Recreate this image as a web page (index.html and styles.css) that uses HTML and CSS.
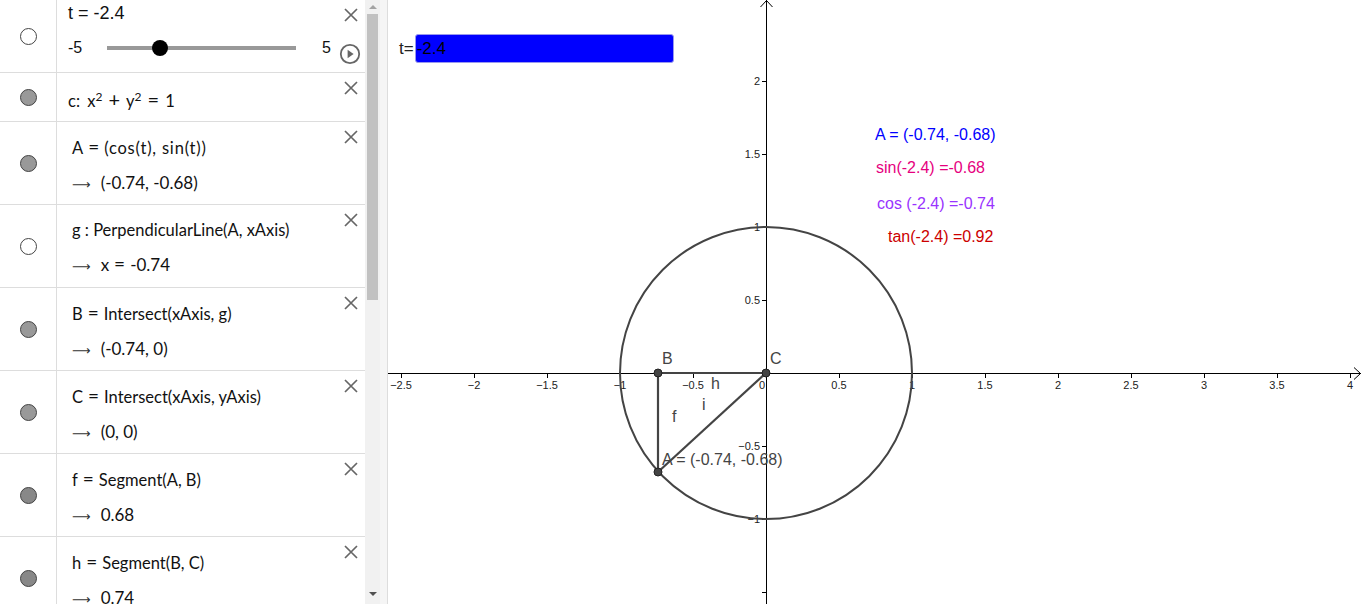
FILE: index.html
```html
<!DOCTYPE html>
<html>
<head>
<meta charset="utf-8">
<link rel="stylesheet" href="styles.css">
</head>
<body>
<div class="app">
  <div class="algebra">
    <div class="rows">
      <div class="row slider-row">
        <div class="marker"><span class="dot open"></span></div>
        <div class="content">
          <div class="slider-title">t = -2.4</div>
          <div class="slider-line">
            <span class="lim">-5</span>
            <span class="track"><span class="knob"></span></span>
            <span class="lim max">5</span>
            <svg class="play" width="22" height="22" viewBox="0 0 22 22"><circle cx="11" cy="11" r="9.2" fill="none" stroke="#666" stroke-width="1.8"/><path d="M8.6 6.8 L14.6 11 L8.6 15.2 Z" fill="#666"/></svg>
          </div>
        </div>
        <svg class="close" width="14" height="14" viewBox="0 0 14 14"><path d="M1 1 L13 13 M13 1 L1 13" stroke="#666" stroke-width="1.7"/></svg>
      </div>
      <div class="row c-row">
        <div class="marker"><span class="dot"></span></div>
        <div class="content"><div class="def single">c: <span class="gap"></span>x<span class="sup">2</span><span class="op wideop">+</span>y<span class="sup">2</span><span class="op wideop">=</span>1</div></div>
        <svg class="close" width="14" height="14" viewBox="0 0 14 14"><path d="M1 1 L13 13 M13 1 L1 13" stroke="#666" stroke-width="1.7"/></svg>
      </div>
      <div class="row">
        <div class="marker"><span class="dot"></span></div>
        <div class="content"><div class="def">A<span class="op">=</span><span class="wide">(cos(t), sin(t))</span></div><div class="val"><span class="arr">⟶</span>(-0.74, -0.68)</div></div>
        <svg class="close" width="14" height="14" viewBox="0 0 14 14"><path d="M1 1 L13 13 M13 1 L1 13" stroke="#666" stroke-width="1.7"/></svg>
      </div>
      <div class="row">
        <div class="marker"><span class="dot open"></span></div>
        <div class="content"><div class="def">g : PerpendicularLine(A, xAxis)</div><div class="val"><span class="arr">⟶</span>x<span class="op">=</span>-0.74</div></div>
        <svg class="close" width="14" height="14" viewBox="0 0 14 14"><path d="M1 1 L13 13 M13 1 L1 13" stroke="#666" stroke-width="1.7"/></svg>
      </div>
      <div class="row">
        <div class="marker"><span class="dot"></span></div>
        <div class="content"><div class="def">B<span class="op">=</span>Intersect(xAxis, g)</div><div class="val"><span class="arr">⟶</span>(-0.74, 0)</div></div>
        <svg class="close" width="14" height="14" viewBox="0 0 14 14"><path d="M1 1 L13 13 M13 1 L1 13" stroke="#666" stroke-width="1.7"/></svg>
      </div>
      <div class="row">
        <div class="marker"><span class="dot"></span></div>
        <div class="content"><div class="def">C<span class="op">=</span>Intersect(xAxis, yAxis)</div><div class="val"><span class="arr">⟶</span>(0, 0)</div></div>
        <svg class="close" width="14" height="14" viewBox="0 0 14 14"><path d="M1 1 L13 13 M13 1 L1 13" stroke="#666" stroke-width="1.7"/></svg>
      </div>
      <div class="row">
        <div class="marker"><span class="dot dark"></span></div>
        <div class="content"><div class="def">f<span class="op">=</span>Segment(A, B)</div><div class="val"><span class="arr">⟶</span>0.68</div></div>
        <svg class="close" width="14" height="14" viewBox="0 0 14 14"><path d="M1 1 L13 13 M13 1 L1 13" stroke="#666" stroke-width="1.7"/></svg>
      </div>
      <div class="row">
        <div class="marker"><span class="dot dark"></span></div>
        <div class="content"><div class="def">h<span class="op">=</span>Segment(B, C)</div><div class="val"><span class="arr">⟶</span>0.74</div></div>
        <svg class="close" width="14" height="14" viewBox="0 0 14 14"><path d="M1 1 L13 13 M13 1 L1 13" stroke="#666" stroke-width="1.7"/></svg>
      </div>
    </div>
    <div class="scrollbar">
      <span class="sb-up"></span>
      <span class="sb-thumb"></span>
      <span class="sb-down"></span>
    </div>
  </div>
  <div class="splitter"></div>
  <div class="graphics">
    <div class="input-box">
      <span class="input-label">t=</span>
      <span class="input-field">-2.4</span>
    </div>
    <div class="info">
      <div class="info-a">A = (-0.74, -0.68)</div>
      <div class="info-sin">sin(-2.4) =-0.68</div>
      <div class="info-cos">cos (-2.4) =-0.74</div>
      <div class="info-tan">tan(-2.4) =0.92</div>
    </div>
    <svg class="plot" width="978" height="604" viewBox="388 0 978 604">
      <g stroke="#000" stroke-width="1" fill="none">
        <line x1="388" y1="373.5" x2="1361" y2="373.5"/>
        <path d="M1354 367.5 L1360.5 373.5 L1354 379.5"/>
        <line x1="766.5" y1="0" x2="766.5" y2="604"/>
        <path d="M760.5 7 L766.5 0.5 L772.5 7"/>
        <path d="M401.5 373 v5 M474.5 373 v5 M547.5 373 v5 M620.5 373 v5 M693.5 373 v5 M839.5 373 v5 M912.5 373 v5 M985.5 373 v5 M1058.5 373 v5 M1131.5 373 v5 M1204.5 373 v5 M1277.5 373 v5 M1350.5 373 v5"/>
        <path d="M762 81.5 h4 M762 154.5 h4 M762 227.5 h4 M762 300.5 h4 M762 446.5 h4 M762 519.5 h4 M762 592.5 h4"/>
      </g>
      <g class="ticklbl" text-anchor="middle">
        <text x="401" y="389">−2.5</text>
        <text x="474" y="389">−2</text>
        <text x="547" y="389">−1.5</text>
        <text x="620" y="389">−1</text>
        <text x="693" y="389">−0.5</text>
        <text x="762" y="389">0</text>
        <text x="839" y="389">0.5</text>
        <text x="912" y="389">1</text>
        <text x="985" y="389">1.5</text>
        <text x="1058" y="389">2</text>
        <text x="1131" y="389">2.5</text>
        <text x="1204" y="389">3</text>
        <text x="1277" y="389">3.5</text>
        <text x="1350" y="389">4</text>
      </g>
      <g class="ticklbl" text-anchor="end">
        <text x="760" y="85">2</text>
        <text x="760" y="158">1.5</text>
        <text x="760" y="231">1</text>
        <text x="760" y="304">0.5</text>
        <text x="760" y="450">−0.5</text>
        <text x="760" y="523">−1</text>
      </g>
      <circle cx="766" cy="373" r="146" fill="none" stroke="#444" stroke-width="2"/>
      <g stroke="#444" stroke-width="2.2" fill="none">
        <line x1="658" y1="373" x2="766" y2="373"/>
        <line x1="658" y1="373" x2="658" y2="472"/>
        <line x1="658" y1="472" x2="766" y2="373"/>
      </g>
      <g fill="#444" stroke="#222" stroke-width="1">
        <circle cx="658" cy="373" r="4"/>
        <circle cx="766" cy="373" r="4"/>
        <circle cx="658" cy="472" r="4"/>
      </g>
      <g class="objlbl">
        <text x="662" y="364">B</text>
        <text x="770" y="364">C</text>
        <text x="711" y="389">h</text>
        <text x="702" y="410">i</text>
        <text x="672" y="422">f</text>
        <text x="662" y="465">A = (-0.74, -0.68)</text>
      </g>
    </svg>
  </div>
</div>
</body>
</html>
```
FILE: styles.css
```css
html, body {
  margin: 0;
  padding: 0;
  background: #fff;
  overflow: hidden;
}
.app {
  display: flex;
  width: 1366px;
  height: 604px;
  font-family: "Liberation Sans", Arial, sans-serif;
}
.algebra {
  display: flex;
  width: 380px;
  height: 604px;
  flex: none;
  overflow: hidden;
}
.rows {
  width: 365px;
  flex: none;
  display: flex;
  flex-direction: column;
}
.row {
  display: flex;
  height: 83px;
  flex: none;
  border-bottom: 1px solid #ddd;
  box-sizing: border-box;
  position: relative;
}
.slider-row { height: 73px; }
.c-row { height: 49px; }
.marker {
  width: 56px;
  flex: none;
  border-right: 1px solid #ddd;
  display: flex;
  align-items: center;
  justify-content: center;
}
.dot {
  width: 17px;
  height: 17px;
  border-radius: 50%;
  box-sizing: border-box;
  border: 1px solid #444;
  background: #999;
}
.dot.open { background: #fff; }
.dot.dark { background: #888; }
.content {
  flex: 1;
  padding-left: 15px;
  display: flex;
  flex-direction: column;
}
.slider-title {
  font-size: 18px;
  color: #111;
  margin-top: 3px;
  margin-left: -4px;
}
.slider-line {
  display: flex;
  align-items: center;
  margin-top: 12px;
  margin-left: -4px;
  height: 24px;
}
.lim { font-size: 16px; color: #111; width: 39px; }
.lim.max { width: auto; margin-left: 26px; }
.track {
  width: 189px;
  height: 4px;
  background: #999;
  position: relative;
}
.knob {
  position: absolute;
  left: 45px;
  top: -6px;
  width: 16px;
  height: 16px;
  border-radius: 50%;
  background: #000;
}
.play { margin-left: 8px; margin-top: 12px; }
.close {
  position: absolute;
  right: 7px;
  top: 8px;
}
.def, .val {
  font-family: "Lato", "DejaVu Sans", sans-serif;
  font-size: 16.5px;
  color: #111;
}
.val { font-size: 17px; }
.op { margin: 0 5px; font-size: 19px; line-height: 1; }
.wideop { margin: 0 6px; font-size: 20px; }
.gap { display: inline-block; width: 3px; }
.wide { letter-spacing: 0.8px; }
.sup { font-size: 12px; vertical-align: 6px; }
.def { margin-top: 15px; }
.def.single { margin-top: 16px; margin-left: -4px; }
.val { margin-top: 14px; }
.arr { color: #333; font-size: 13px; margin-right: 10px; }
.scrollbar {
  width: 15px;
  flex: none;
  background: #f1f1f1;
  display: flex;
  flex-direction: column;
  align-items: center;
}
.sb-up {
  margin-top: 5px;
  width: 0; height: 0;
  border-left: 4px solid transparent;
  border-right: 4px solid transparent;
  border-bottom: 4px solid #a3a3a3;
}
.sb-thumb {
  margin-top: 5px;
  width: 11px;
  height: 286px;
  background: #c1c1c1;
}
.sb-down {
  margin-top: auto;
  margin-bottom: 8px;
  width: 0; height: 0;
  border-left: 4px solid transparent;
  border-right: 4px solid transparent;
  border-top: 4px solid #505050;
}
.splitter {
  width: 7px;
  flex: none;
  background: #f5f5f5;
  border-right: 1px solid #ddd;
}
.graphics {
  position: relative;
  flex: 1;
  height: 604px;
  overflow: hidden;
}
.plot { display: block; }
.ticklbl text { font-size: 11px; fill: #222; font-family: "Liberation Sans", Arial, sans-serif; }
.objlbl text { font-size: 16px; fill: #444; font-family: "Liberation Sans", Arial, sans-serif; }
.input-box {
  position: absolute;
  left: 11px;
  top: 34px;
  display: flex;
  align-items: center;
  font-size: 17px;
}
.input-label { color: #222; margin-right: 1px; }
.input-field {
  width: 259px;
  height: 29px;
  box-sizing: border-box;
  background: #0000ff;
  border: 1px solid #9999ee;
  border-radius: 3px;
  color: #000;
  padding-left: 1px;
  line-height: 27px;
}
.info {
  position: absolute;
  left: 487px;
  top: 126px;
  font-size: 16px;
}
.info-a { color: #0000ff; }
.info-sin { color: #e6007e; margin-top: 15px; margin-left: 1px; }
.info-cos { color: #9933ff; margin-top: 18px; margin-left: 2px; }
.info-tan { color: #cc0000; margin-top: 15px; margin-left: 13px; }
```
